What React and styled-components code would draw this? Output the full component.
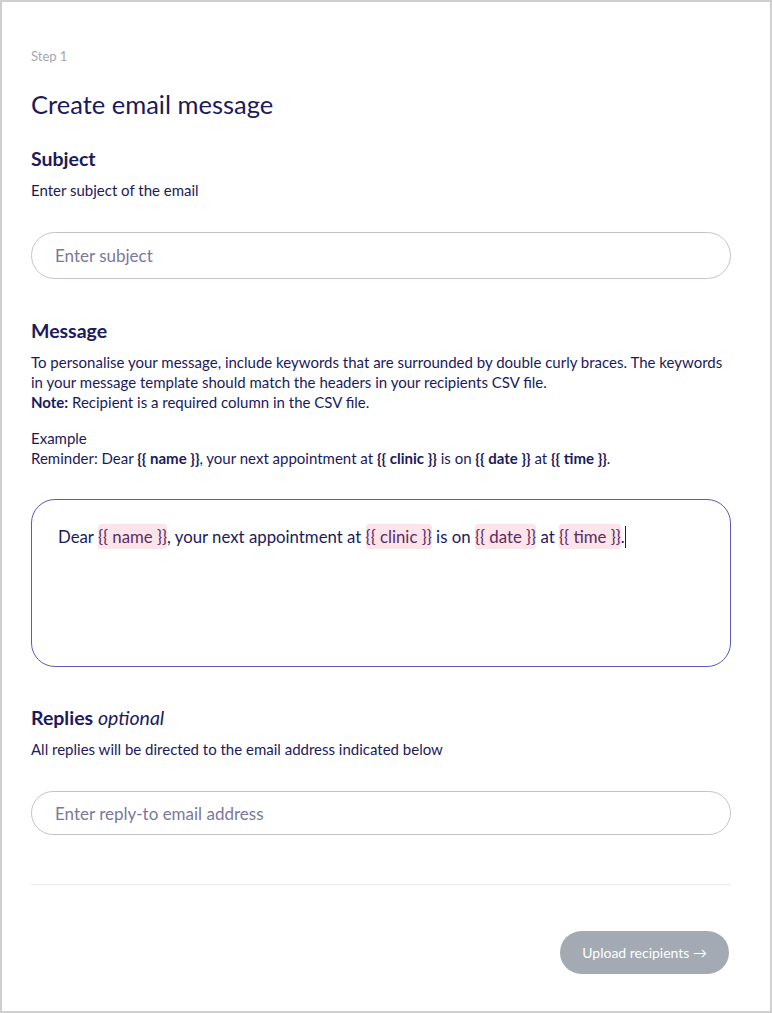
import React from "react";
import styled, { createGlobalStyle } from "styled-components";

const Global = createGlobalStyle`
  html, body { margin: 0; padding: 0; background: #fff; }
  body { font-family: "Source Sans Pro", Lato, "Noto Sans", sans-serif; color: #1b1a5c; }
  * { box-sizing: border-box; }
`;

const Frame = styled.div`
  width: 772px;
  height: 1013px;
  border: 2px solid #cfcfcf;
  padding: 44px 40px 0 29px;
  display: flex;
  flex-direction: column;
`;

const Step = styled.div`
  font-size: 13px;
  color: #a6a6b0;
  line-height: 20px;
`;

const Title = styled.h1`
  margin: 20px 0 0;
  font-size: 25.5px;
  font-weight: 400;
  line-height: 36px;
  color: #1b1a5c;
`;

const Heading = styled.h2`
  margin: ${(p) => p.$mt || 0}px 0 0;
  font-size: 19.5px;
  font-weight: 700;
  line-height: 28px;
  em {
    font-weight: 400;
    font-style: italic;
  }
`;

const Hint = styled.p`
  margin: ${(p) => p.$mt || 0}px 0 0;
  font-size: 15px;
  line-height: 20px;
  b { font-weight: 700; }
`;

const Input = styled.input`
  margin-top: ${(p) => p.$mt || 0}px;
  width: 700px;
  height: ${(p) => p.$h || 47}px;
  border: 1px solid #c4c4cc;
  border-radius: 999px;
  padding: 0 23px;
  font-family: inherit;
  font-size: 17px;
  color: #1b1a5c;
  outline: none;
  &::placeholder { color: #7a789c; }
`;

const Editor = styled.div`
  margin-top: 31px;
  width: 700px;
  height: 168px;
  border: 1px solid #5b59bd;
  border-radius: 24px;
  padding: 24px 26px;
  font-size: 16.8px;
  line-height: 26px;
`;

const Tag = styled.span`
  background: #fde4ea;
  color: #5a2b62;
  border-radius: 3px;
  padding: 2px 0;
`;

const Caret = styled.span`
  display: inline-block;
  width: 1px;
  height: 22px;
  background: #1b1a5c;
  vertical-align: -5px;
`;

const Divider = styled.hr`
  margin: 49px 0 0;
  width: 700px;
  border: none;
  border-top: 1px solid #ececf3;
`;

const Footer = styled.div`
  width: 700px;
  display: flex;
  justify-content: flex-end;
  margin-top: 46px;
  padding-right: 2px;
`;

const Button = styled.button`
  height: 43px;
  padding: 0 22px;
  border: none;
  border-radius: 999px;
  background: #a3aab4;
  color: #fff;
  font-family: inherit;
  font-size: 14px;
`;

export default function App() {
  return (
    <>
      <Global />
      <Frame>
        <Step>Step 1</Step>
        <Title>Create email message</Title>
        <Heading $mt={23}>Subject</Heading>
        <Hint $mt={7}>Enter subject of the email</Hint>
        <Input $mt={32} placeholder="Enter subject" />
        <Heading $mt={38}>Message</Heading>
        <Hint $mt={7}>
          To personalise your message, include keywords that are surrounded by double curly braces. The keywords in your message template should match the headers in your recipients CSV file.
          <br />
          <b>Note:</b> Recipient is a required column in the CSV file.
        </Hint>
        <Hint $mt={16}>
          Example
          <br />
          Reminder: Dear <b>{"{{ name }}"}</b>, your next appointment at <b>{"{{ clinic }}"}</b> is on <b>{"{{ date }}"}</b> at <b>{"{{ time }}"}</b>.
        </Hint>
        <Editor>
          Dear <Tag>{"{{ name }}"}</Tag>, your next appointment at <Tag>{"{{ clinic }}"}</Tag> is on <Tag>{"{{ date }}"}</Tag> at <Tag>{"{{ time }}"}</Tag>.<Caret />
        </Editor>
        <Heading $mt={37}>
          Replies <em>optional</em>
        </Heading>
        <Hint $mt={7}>All replies will be directed to the email address indicated below</Hint>
        <Input $mt={32} $h={44} placeholder="Enter reply-to email address" />
        <Divider />
        <Footer>
          <Button>Upload recipients →</Button>
        </Footer>
      </Frame>
    </>
  );
}
